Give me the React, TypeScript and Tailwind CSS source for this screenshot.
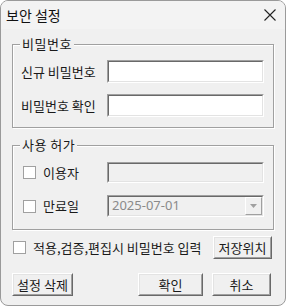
import React from "react";

const font = { fontFamily: '"Noto Sans CJK KR", "Noto Sans", sans-serif' };

function Sunken({ className = "", children }: { className?: string; children?: React.ReactNode }) {
  return (
    <div className={`border border-t-[#a0a0a0] border-l-[#a0a0a0] border-b-white border-r-white ${className}`}>
      <div className="h-full w-full border border-t-[#696969] border-l-[#696969] border-b-[#e3e3e3] border-r-[#e3e3e3]">
        {children}
      </div>
    </div>
  );
}

function Btn({ children, className = "" }: { children: React.ReactNode; className?: string }) {
  return (
    <div className={`h-[23px] border border-t-white border-l-white border-b-[#696969] border-r-[#696969] ${className}`}>
      <div className="flex h-full w-full items-center justify-center border border-t-[#e3e3e3] border-l-[#e3e3e3] border-b-[#a0a0a0] border-r-[#a0a0a0] bg-[#f0f0f0] text-[13px] text-[#1a1a1a]">
        {children}
      </div>
    </div>
  );
}

function Check() {
  return <div className="h-[13px] w-[13px] border border-[#a0a0a0] bg-white" />;
}

function Group({ title, className = "", children }: { title: string; className?: string; children: React.ReactNode }) {
  return (
    <div className={`relative border border-[#a0a0a0] shadow-[1px_1px_0_white,inset_1px_1px_0_white] ${className}`}>
      <div className="absolute left-[7px] top-[-9px] bg-[#f0f0f0] px-[2px] text-[13px] leading-[16px] tracking-[0.5px] text-[#1a1a1a]">
        {title}
      </div>
      {children}
    </div>
  );
}

export default function App() {
  return (
    <div className="h-[306px] w-[286px] bg-white" style={font}>
      <div className="flex h-full w-full flex-col overflow-hidden rounded-[8px] border border-[#9a9a9a] bg-[#f0f0f0]">
        <div className="flex h-[28px] items-center justify-between bg-[#f3f3f3] pl-[5px] pr-[9px]">
          <span className="text-[14px] text-[#111]">보안 설정</span>
          <svg width="12" height="12" viewBox="0 0 12 12">
            <path d="M0.5 0.5 L11.5 11.5 M11.5 0.5 L0.5 11.5" stroke="#222" strokeWidth="1.1" />
          </svg>
        </div>
        <div className="flex flex-1 flex-col px-[11px] pt-[15px]">
          <Group title="비밀번호" className="h-[84px] w-[262px]">
            <div className="flex flex-col gap-[11px] pl-[8px] pt-[15px]">
              <div className="flex items-center">
                <span className="w-[86px] text-[13px] text-[#1a1a1a]">신규 비밀번호</span>
                <Sunken className="h-[23px] w-[157px] bg-white" />
              </div>
              <div className="flex items-center">
                <span className="w-[86px] text-[13px] text-[#1a1a1a]">비밀번호 확인</span>
                <Sunken className="h-[23px] w-[157px] bg-white" />
              </div>
            </div>
          </Group>
          <Group title="사용 허가" className="mt-[17px] h-[85px] w-[262px]">
            <div className="flex flex-col gap-[12px] pl-[10px] pt-[16px]">
              <div className="flex items-center">
                <div className="flex w-[84px] items-center gap-[7px]">
                  <Check />
                  <span className="text-[13px] text-[#1a1a1a]">이용자</span>
                </div>
                <Sunken className="h-[21px] w-[157px] bg-[#f0f0f0]" />
              </div>
              <div className="flex items-center">
                <div className="flex w-[84px] items-center gap-[7px]">
                  <Check />
                  <span className="text-[13px] text-[#1a1a1a]">만료일</span>
                </div>
                <Sunken className="h-[22px] w-[157px] bg-[#f0f0f0]">
                  <div className="flex h-full items-center justify-between">
                    <span className="pl-[3px] text-[13px] text-[#8a8a8a]" style={{ fontFamily: '"Noto Sans", sans-serif' }}>2025-07-01</span>
                    <div className="flex h-[18px] w-[17px] items-center justify-center border border-t-white border-l-white border-b-[#a0a0a0] border-r-[#a0a0a0] bg-[#f0f0f0]">
                      <svg width="7" height="4" viewBox="0 0 7 4">
                        <path d="M0 0 L7 0 L3.5 4 Z" fill="#a0a0a0" />
                      </svg>
                    </div>
                  </div>
                </Sunken>
              </div>
            </div>
          </Group>
          <div className="mt-[6px] flex items-center justify-between">
            <div className="flex items-center gap-[7px] pl-[1px]">
              <Check />
              <span className="text-[13px] text-[#1a1a1a]">적용,검증,편집시 비밀번호 입력</span>
            </div>
            <Btn className="mr-[2px] w-[59px]">저장위치</Btn>
          </div>
          <div className="mt-[14px] flex items-center">
            <Btn className="w-[61px]">설정 삭제</Btn>
            <Btn className="ml-[65px] w-[65px]">확인</Btn>
            <Btn className="ml-[9px] w-[59px]">취소</Btn>
          </div>
        </div>
      </div>
    </div>
  );
}
